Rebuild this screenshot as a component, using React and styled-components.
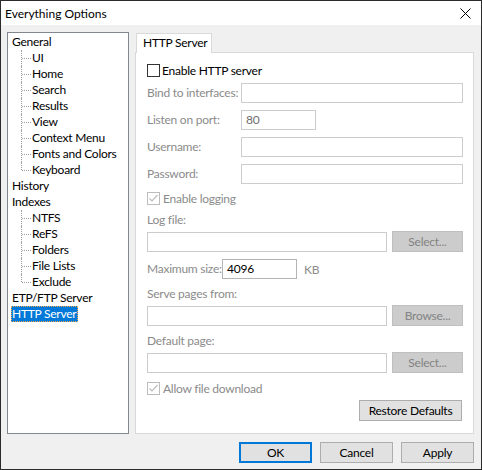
import React from "react";
import styled, { createGlobalStyle } from "styled-components";

const Global = createGlobalStyle`
  html, body { margin: 0; padding: 0; background: #fff; }
  body { font-family: Lato, "Liberation Sans", sans-serif; font-size: 12px; letter-spacing: -0.25px; }
  * { box-sizing: border-box; }
`;

const Window = styled.div`
  width: 482px;
  height: 470px;
  border: 1px solid #2b2b2b;
  background: #f0f0f0;
  display: flex;
  flex-direction: column;
  color: #000;
`;

const TitleBar = styled.div`
  height: 24px;
  background: #fff;
  display: flex;
  align-items: center;
  justify-content: space-between;
  padding: 0 10px 0 4px;
  font-size: 12px;
  letter-spacing: 0;
`;

const Body = styled.div`
  flex: 1;
  display: flex;
  flex-direction: column;
  padding: 7px 7px 6px 6px;
`;

const Main = styled.div`
  display: flex;
  gap: 6px;
  height: 402px;
`;

const Tree = styled.div`
  width: 122px;
  border: 1px solid #828790;
  background: #fff;
  padding: 1px 0 0 0;
`;

const TreeItem = styled.div`
  height: 16px;
  line-height: 16px;
  padding-left: 4px;
  white-space: nowrap;
`;

const Group = styled.div`
  padding-left: 13px;
`;

const ChildItem = styled.div`
  position: relative;
  height: 16px;
  line-height: 16px;
  padding-left: 11px;
  white-space: nowrap;
  &::before {
    content: "";
    position: absolute;
    left: 0;
    top: 0;
    height: ${(p) => (p.$last ? "8px" : "16px")};
    border-left: 1px dotted #a0a0a0;
  }
  &::after {
    content: "";
    position: absolute;
    left: 1px;
    top: 8px;
    width: 9px;
    border-top: 1px dotted #a0a0a0;
  }
`;

const Selected = styled.span`
  display: inline-block;
  height: 16px;
  line-height: 14px;
  background: #0078d7;
  color: #fff;
  padding: 0 1px 0 0;
  margin-left: -1px;
  border: 1px dotted #000;
  outline: 1px dotted #f7a94a;
  outline-offset: -1px;
`;

const TabArea = styled.div`
  width: 339px;
  display: flex;
  flex-direction: column;
`;

const TabStrip = styled.div`
  height: 20px;
  display: flex;
  align-items: flex-end;
  padding-left: 1px;
`;

const Tab = styled.div`
  position: relative;
  z-index: 1;
  height: 20px;
  margin-bottom: -1px;
  width: 76px;
  padding-left: 6px;
  line-height: 18px;
  white-space: nowrap;
  background: #fff;
  border: 1px solid #d9d9d9;
  border-bottom: 0;
`;

const Panel = styled.div`
  flex: 1;
  border: 1px solid #d9d9d9;
  background: #fff;
  padding: 9px 10px 0 11px;
  display: flex;
  flex-direction: column;
`;

const CheckRow = styled.div`
  height: 16px;
  display: flex;
  align-items: center;
  gap: ${(p) => (p.$disabled ? "3px" : "2px")};
  margin-top: ${(p) => p.$mt || 0}px;
  color: ${(p) => (p.$disabled ? "#8b8b8b" : "#000")};
`;

const Box = styled.span`
  width: 13px;
  height: 13px;
  border: 1px solid ${(p) => (p.$disabled ? "#bcbcbc" : "#333")};
  background: #fff;
  display: flex;
  align-items: center;
  justify-content: center;
`;

const FieldRow = styled.div`
  display: flex;
  align-items: center;
  margin-top: ${(p) => p.$mt || 0}px;
`;

const Label = styled.div`
  width: ${(p) => (p.$w ? `${p.$w}px` : "auto")};
  flex: none;
  height: 16px;
  line-height: 16px;
  color: #8b8b8b;
  margin-top: ${(p) => p.$mt || 0}px;
  white-space: nowrap;
`;

const TextBox = styled.div`
  height: 20px;
  width: ${(p) => (p.$w ? `${p.$w}px` : "auto")};
  flex: ${(p) => (p.$w ? "none" : 1)};
  border: 1px solid ${(p) => (p.$enabled ? "#b4b4b4" : "#cccccc")};
  background: #fff;
  padding-left: 4px;
  line-height: 18px;
  color: ${(p) => (p.$enabled ? "#000" : "#6d6d6d")};
`;

const SideButton = styled.div`
  width: 71px;
  height: 21px;
  margin-left: 5px;
  background: #cccccc;
  border: 1px solid #bfbfbf;
  color: #838383;
  display: flex;
  align-items: center;
  justify-content: center;
`;

const Unit = styled.span`
  margin-left: 7px;
  color: #8b8b8b;
`;

const Button = styled.div`
  width: ${(p) => p.$w || 73}px;
  height: 21px;
  background: #e1e1e1;
  border: 1px solid ${(p) => (p.$default ? "#0078d7" : "#adadad")};
  box-shadow: ${(p) => (p.$default ? "inset 0 0 0 1px #0078d7" : "none")};
  display: flex;
  align-items: center;
  justify-content: center;
`;

const RestoreRow = styled.div`
  display: flex;
  justify-content: flex-end;
  margin-top: 4px;
  padding-right: 1px;
`;

const ButtonRow = styled.div`
  display: flex;
  justify-content: flex-end;
  gap: 8px;
  margin-top: 8px;
`;

const Check = () => (
  <svg width="11" height="11" viewBox="0 0 11 11">
    <path d="M1.5 5.5 L4 8 L9.5 2" fill="none" stroke="#bcbcbc" strokeWidth="1.2" />
  </svg>
);

const CheckBox = ({ label, checked, disabled, mt }) => (
  <CheckRow $disabled={disabled} $mt={mt}>
    <Box $disabled={disabled}>{checked && <Check />}</Box>
    <span>{label}</span>
  </CheckRow>
);

const Close = () => (
  <svg width="11" height="11" viewBox="0 0 11 11">
    <path d="M0.5 0.5 L10.5 10.5 M10.5 0.5 L0.5 10.5" stroke="#000" strokeWidth="1" />
  </svg>
);

const generalChildren = ["UI", "Home", "Search", "Results", "View", "Context Menu", "Fonts and Colors", "Keyboard"];
const indexChildren = ["NTFS", "ReFS", "Folders", "File Lists", "Exclude"];

export default function App() {
  return (
    <>
      <Global />
      <Window>
        <TitleBar>
          <span>Everything Options</span>
          <Close />
        </TitleBar>
        <Body>
          <Main>
            <Tree>
              <TreeItem>General</TreeItem>
              <Group>
                {generalChildren.map((c, i) => (
                  <ChildItem key={c} $last={i === generalChildren.length - 1}>{c}</ChildItem>
                ))}
              </Group>
              <TreeItem>History</TreeItem>
              <TreeItem>Indexes</TreeItem>
              <Group>
                {indexChildren.map((c, i) => (
                  <ChildItem key={c} $last={i === indexChildren.length - 1}>{c}</ChildItem>
                ))}
              </Group>
              <TreeItem>ETP/FTP Server</TreeItem>
              <TreeItem>
                <Selected>HTTP Server</Selected>
              </TreeItem>
            </Tree>
            <TabArea>
              <TabStrip>
                <Tab>HTTP Server</Tab>
              </TabStrip>
              <Panel>
                <CheckBox label="Enable HTTP server" />
                <FieldRow $mt={5}>
                  <Label $w={94}>Bind to interfaces:</Label>
                  <TextBox />
                </FieldRow>
                <FieldRow $mt={7}>
                  <Label $w={94}>Listen on port:</Label>
                  <TextBox $w={75}>80</TextBox>
                </FieldRow>
                <FieldRow $mt={7}>
                  <Label $w={94}>Username:</Label>
                  <TextBox />
                </FieldRow>
                <FieldRow $mt={7}>
                  <Label $w={94}>Password:</Label>
                  <TextBox />
                </FieldRow>
                <CheckBox label="Enable logging" checked disabled mt={6} />
                <Label $mt={6}>Log file:</Label>
                <FieldRow $mt={3}>
                  <TextBox />
                  <SideButton>Select...</SideButton>
                </FieldRow>
                <FieldRow $mt={7}>
                  <Label $w={75}>Maximum size:</Label>
                  <TextBox $w={75} $enabled>4096</TextBox>
                  <Unit>KB</Unit>
                </FieldRow>
                <Label $mt={7}>Serve pages from:</Label>
                <FieldRow $mt={3}>
                  <TextBox />
                  <SideButton>Browse...</SideButton>
                </FieldRow>
                <Label $mt={7}>Default page:</Label>
                <FieldRow $mt={3}>
                  <TextBox />
                  <SideButton>Select...</SideButton>
                </FieldRow>
                <CheckBox label="Allow file download" checked disabled mt={7} />
                <RestoreRow>
                  <Button $w={103}>Restore Defaults</Button>
                </RestoreRow>
              </Panel>
            </TabArea>
          </Main>
          <ButtonRow>
            <Button $default>OK</Button>
            <Button>Cancel</Button>
            <Button>Apply</Button>
          </ButtonRow>
        </Body>
      </Window>
    </>
  );
}
